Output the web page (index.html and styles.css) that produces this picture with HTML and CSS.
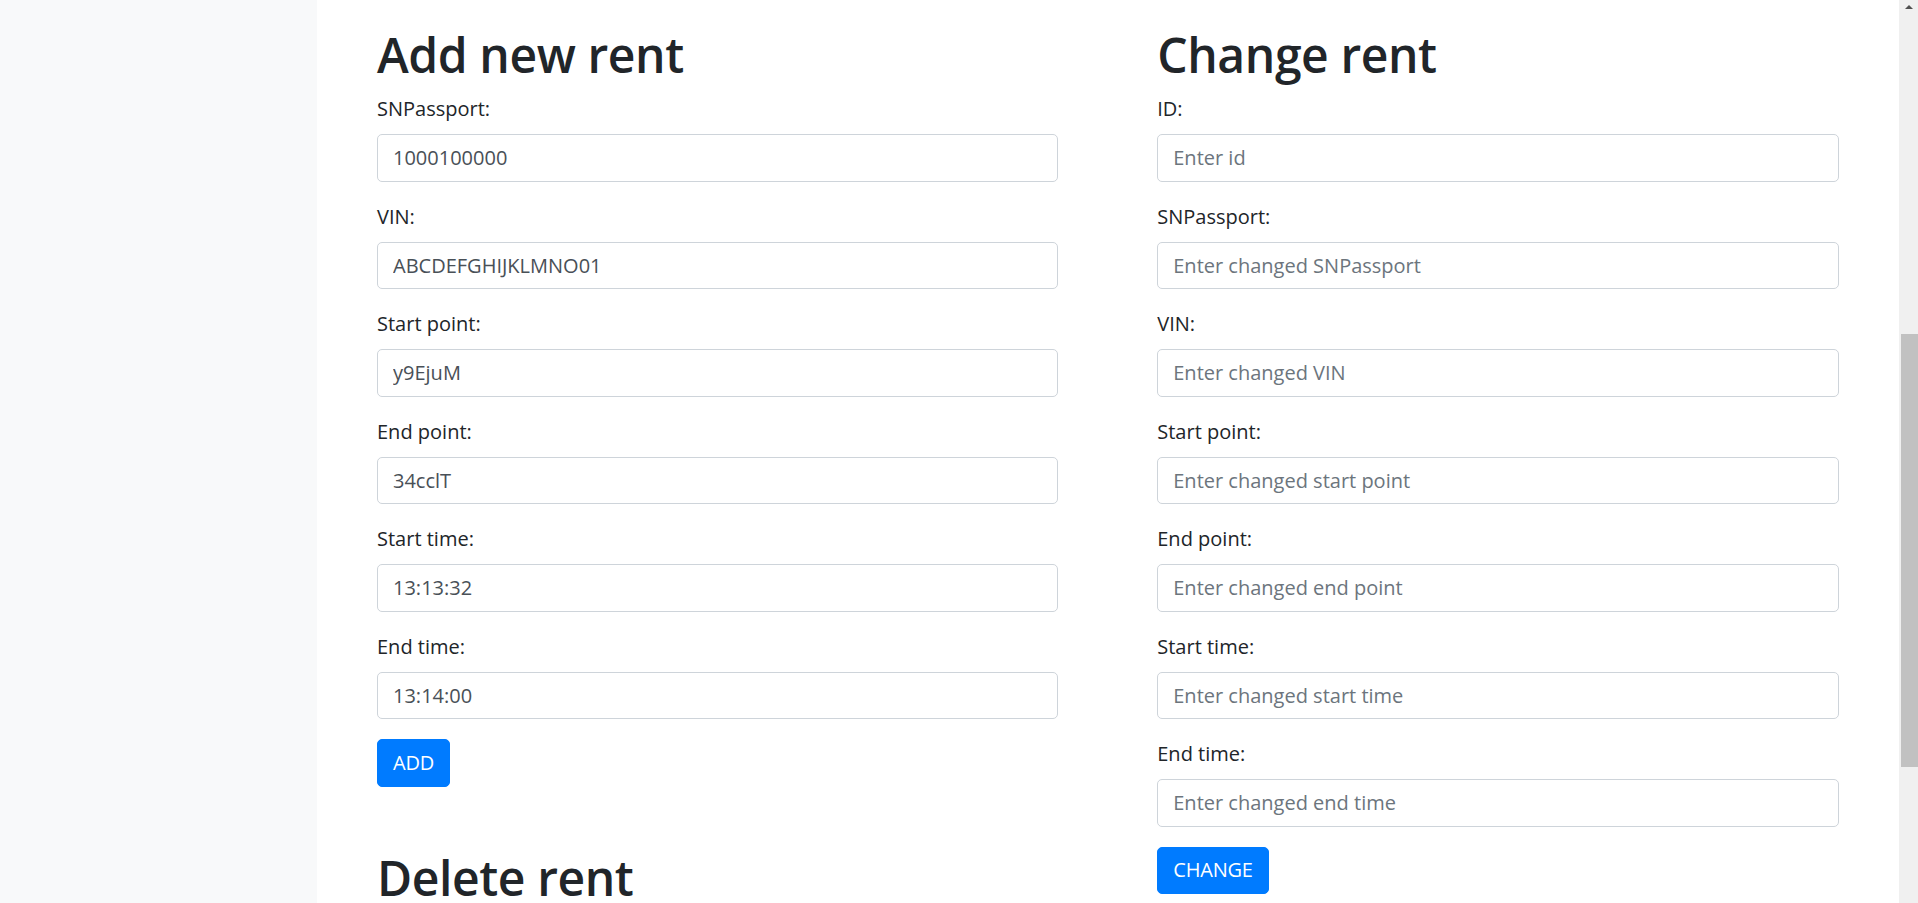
FILE: index.html
```html
<!DOCTYPE html>
<html lang="en">
<head>
<meta charset="utf-8">
<title>Rents</title>
<link rel="stylesheet" href="styles.css">
</head>
<body>
<div class="app">
  <aside class="sidebar"></aside>
  <main class="main">
    <section class="column">
      <h1 class="title">Add new rent</h1>
      <form class="form">
        <div class="group"><label class="label">SNPassport:</label><input class="field" type="text" value="1000100000"></div>
        <div class="group"><label class="label">VIN:</label><input class="field" type="text" value="ABCDEFGHIJKLMNO01"></div>
        <div class="group"><label class="label">Start point:</label><input class="field" type="text" value="y9EjuM"></div>
        <div class="group"><label class="label">End point:</label><input class="field" type="text" value="34cclT"></div>
        <div class="group"><label class="label">Start time:</label><input class="field" type="text" value="13:13:32"></div>
        <div class="group"><label class="label">End time:</label><input class="field" type="text" value="13:14:00"></div>
        <div class="actions"><button class="btn" type="button">ADD</button></div>
      </form>
      <h1 class="title title-spaced">Delete rent</h1>
    </section>
    <section class="column">
      <h1 class="title">Change rent</h1>
      <form class="form">
        <div class="group"><label class="label">ID:</label><input class="field" type="text" placeholder="Enter id"></div>
        <div class="group"><label class="label">SNPassport:</label><input class="field" type="text" placeholder="Enter changed SNPassport"></div>
        <div class="group"><label class="label">VIN:</label><input class="field" type="text" placeholder="Enter changed VIN"></div>
        <div class="group"><label class="label">Start point:</label><input class="field" type="text" placeholder="Enter changed start point"></div>
        <div class="group"><label class="label">End point:</label><input class="field" type="text" placeholder="Enter changed end point"></div>
        <div class="group"><label class="label">Start time:</label><input class="field" type="text" placeholder="Enter changed start time"></div>
        <div class="group"><label class="label">End time:</label><input class="field" type="text" placeholder="Enter changed end time"></div>
        <div class="actions"><button class="btn" type="button">CHANGE</button></div>
      </form>
    </section>
  </main>
  <div class="scrollbar">
    <div class="scroll-arrow"></div>
    <div class="scroll-thumb"></div>
  </div>
</div>
</body>
</html>
```
FILE: styles.css
```css
* { box-sizing: border-box; }

html, body {
  margin: 0;
  padding: 0;
  height: 100%;
  overflow: hidden;
  background: #fff;
}

body {
  font-family: "Open Sans", "Noto Sans", "Liberation Sans", sans-serif;
  font-size: 20px;
  line-height: 30px;
  color: #212529;
}

.app {
  display: flex;
  height: 903px;
  overflow: hidden;
}

.sidebar {
  width: 317px;
  flex: 0 0 317px;
  background: #f8f9fa;
}

.main {
  flex: 1 1 auto;
  display: grid;
  grid-template-columns: 1fr 1fr;
  column-gap: 99px;
  padding: 23px 60.5px 0 60px;
  align-items: start;
  background: #fff;
}

.column {
  display: flex;
  flex-direction: column;
  min-width: 0;
}

.title {
  margin: 0 0 10px 0;
  font-size: 48px;
  line-height: 60px;
  font-weight: 600;
  letter-spacing: -0.4px;
  color: #212529;
  padding-top: 2px;
  height: 61px;
}

.title-spaced {
  margin-top: 59px;
}

.form {
  display: flex;
  flex-direction: column;
  margin: 0;
}

.group {
  display: flex;
  flex-direction: column;
  margin-bottom: 20px;
}

.label {
  display: block;
  margin-bottom: 10px;
  line-height: 30px;
  font-size: 20px;
  color: #212529;
}

.field {
  display: block;
  width: 100%;
  height: 47.5px;
  padding: 7.5px 15px;
  font-family: inherit;
  font-size: 20px;
  line-height: 30px;
  color: #495057;
  background: #fff;
  border: 1px solid #ced4da;
  border-radius: 5px;
  outline: none;
}

.field::placeholder {
  color: #6c757d;
  opacity: 1;
}

.actions {
  display: flex;
}

.btn {
  display: inline-block;
  font-family: inherit;
  font-size: 20px;
  line-height: 30px;
  font-weight: 400;
  color: #fff;
  background: #007bff;
  border: 1px solid #007bff;
  border-radius: 5px;
  padding: 7.75px 15px;
  letter-spacing: -0.2px;
  cursor: pointer;
}

.scrollbar {
  flex: 0 0 19px;
  width: 19px;
  background: #f0f0f0;
  display: flex;
  flex-direction: column;
}

.scroll-arrow {
  width: 0;
  height: 0;
  margin: 5px auto 0;
  border-left: 4px solid transparent;
  border-right: 4px solid transparent;
  border-bottom: 4px solid #505050;
}

.scroll-thumb {
  margin-top: 325px;
  margin-left: 2px;
  height: 433px;
  background: #c1c1c1;
}
```
